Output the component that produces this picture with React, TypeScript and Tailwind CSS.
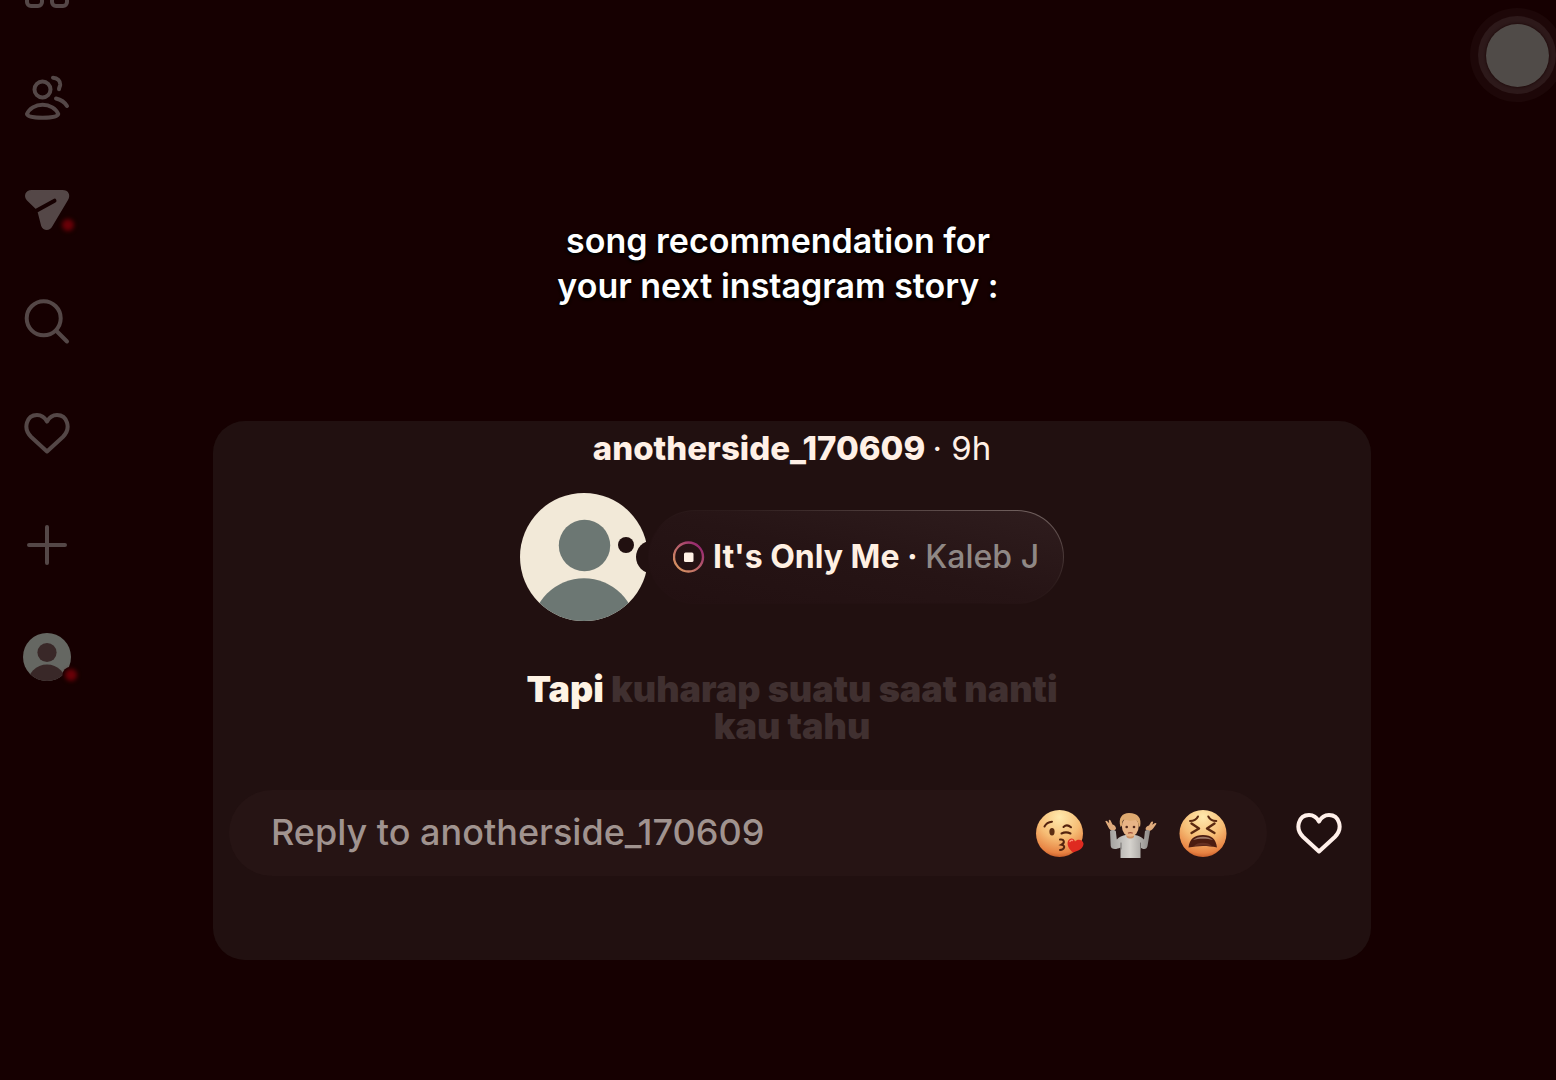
import type { ReactNode } from 'react'
import { clsx } from 'clsx'

const username = 'anotherside_170609'

function Icon({ children, className }: { children: ReactNode; className?: string }) {
  return (
    <svg
      className={clsx('h-12 w-12', className)}
      viewBox="0 0 48 48"
      fill="none"
      stroke="currentColor"
      strokeWidth={4}
      strokeLinecap="round"
      strokeLinejoin="round"
      aria-hidden="true"
    >
      {children}
    </svg>
  )
}

const heartPath =
  'M24 42.500 8.200 28C-.8 19 4 6 14 6c4.600 0 7.800 2.400 10 6.600C26.200 8.400 29.400 6 34 6c10 0 14.800 13 5.800 22z'

const navItems: { label: string; icon: ReactNode; dot?: string }[] = [
  {
    label: 'Home',
    icon: (
      <Icon>
        <rect x="4" y="4" width="15" height="15" rx="4" />
        <rect x="29" y="4" width="15" height="15" rx="4" />
        <rect x="4" y="30" width="15" height="15" rx="4" />
        <rect x="29" y="30" width="15" height="15" rx="4" />
      </Icon>
    ),
  },
  {
    label: 'Friends',
    icon: (
      <Icon>
        <circle cx="19.500" cy="16.500" r="8" />
        <path d="M4 41c2-5.300 8.500-9.300 15.600-9.300S33.200 35.700 35.200 41c-.6 2.700-6 3.700-15.600 3.700S4.600 43.700 4 41z" />
        <path d="M30 4.700c4.500.3 7.500 3.300 7.200 7-.2 1.800-1 2.500-1.200 4.500" />
        <path d="M33 25.500c5 1.200 8.700 3.700 11 7.500" />
      </Icon>
    ),
  },
  {
    label: 'Messages',
    dot: 'left-[39px] top-[34px]',
    icon: (
      <Icon>
        <path
          d="M8.500 5h31c6 0 8.500 5 5.500 10L29.500 41c-2.500 5.500-9.500 5-11.300 0L15 28.500c-.5-1.800-1.200-3.500-2.500-4.800L4 15.500C0 11 2.500 5 8.500 5z"
          fill="currentColor"
          stroke="none"
        />
        <path d="M11 27 31.500 15.700" className="text-[#160001]" />
      </Icon>
    ),
  },
  {
    label: 'Search',
    icon: (
      <Icon>
        <circle cx="20.700" cy="21.300" r="17" />
        <path d="M33.500 34 44 44.500" />
      </Icon>
    ),
  },
  {
    label: 'Activity',
    icon: (
      <Icon>
        <path d={heartPath} />
      </Icon>
    ),
  },
  {
    label: 'Create',
    icon: (
      <Icon>
        <path d="M24 6v36M6 24h36" />
      </Icon>
    ),
  },
  {
    label: 'Profile',
    dot: 'left-[42px] top-9',
    icon: (
      <svg className="h-12 w-12" viewBox="0 0 48 48" aria-hidden="true">
        <clipPath id="profile-clip">
          <circle cx="24" cy="24" r="24" />
        </clipPath>
        <g clipPath="url(#profile-clip)">
          <path d="M0 0h48v48H0z" fill="#656762" />
          <circle cx="24" cy="19.500" r="9.600" fill="#392828" />
          <circle cx="24" cy="51" r="19.500" fill="#392828" />
        </g>
        <circle cx="47.500" cy="42" r="8" fill="#160001" />
      </svg>
    ),
  },
]

function Sidebar() {
  return (
    <nav className="-mt-[39px] flex w-[94px] shrink-0 flex-col items-center gap-16 text-[#544747]">
      {navItems.map(({ label, icon, dot }) => (
        <button key={label} type="button" aria-label={label} className="relative h-12 w-12">
          {icon}
          {dot && <span className={clsx('absolute h-3 w-3 rounded-full bg-[#6a0007] blur-[2px]', dot)} />}
        </button>
      ))}
    </nav>
  )
}

function Avatar() {
  return (
    <svg className="h-32 w-32 shrink-0" viewBox="0 0 128 128" aria-hidden="true">
      <defs>
        <clipPath id="avatar-clip">
          <circle cx="64" cy="64" r="64" />
        </clipPath>
      </defs>
      <g clipPath="url(#avatar-clip)">
        <path d="M0 0h128v128H0z" fill="#f2e9d8" />
        <circle cx="64.500" cy="52.500" r="25.700" fill="#6c7773" />
        <circle cx="64" cy="137.500" r="52.300" fill="#6c7773" />
      </g>
      <circle cx="106" cy="52" r="8" fill="#211010" />
      <circle cx="132.500" cy="64" r="16.500" fill="#211010" />
      <path d="M126 0h2v128h-2z" fill="#211010" />
    </svg>
  )
}

function MusicPill() {
  return (
    <button
      type="button"
      className="rounded-full bg-linear-to-tr from-[#231112] from-40% via-[#2d1c1c] via-60% to-[#7a6a68] p-px"
    >
      <span className="flex h-[92px] items-center gap-2 rounded-full bg-linear-to-tr from-[#221011] via-[#261415] to-[#2f1d1e] px-6 text-[32px]">
        <svg className="h-8 w-8" viewBox="0 0 32 32" fill="none" aria-hidden="true">
          <defs>
            <linearGradient id="ring" x1="0" y1="1" x2="1" y2="0">
              <stop offset="0" stopColor="#dfa05f" />
              <stop offset=".5" stopColor="#b8616a" />
              <stop offset="1" stopColor="#8d1672" />
            </linearGradient>
          </defs>
          <circle cx="15.500" cy="16" r="14.500" stroke="url(#ring)" strokeWidth="2.400" />
          <rect x="11" y="11.500" width="9.500" height="9.500" rx="1.500" fill="#fff2e6" />
        </svg>
        <span className="whitespace-nowrap font-bold text-[#fff0e2]">
          It's Only Me · <span className="font-medium text-[#8f8885]">Kaleb J</span>
        </span>
      </span>
    </button>
  )
}

function FaceGradient({ id }: { id: string }) {
  return (
    <defs>
      <radialGradient id={id} cx=".5" cy=".15" r=".9">
        <stop offset="0" stopColor="#ffe9ad" />
        <stop offset=".5" stopColor="#f6bd75" />
        <stop offset=".85" stopColor="#e78242" />
        <stop offset="1" stopColor="#b84d20" />
      </radialGradient>
    </defs>
  )
}

function KissEmoji() {
  return (
    <svg className="h-12 w-12 overflow-visible" viewBox="0 0 48 48" fill="none" strokeLinecap="round" aria-hidden="true">
      <FaceGradient id="kiss-face" />
      <circle cx="24.500" cy="24.500" r="23.500" fill="url(#kiss-face)" />
      <g stroke="#54230f" strokeWidth="2">
        <path d="M9.500 17.500c1.500-3 4-4.500 7.500-4.800M28.500 18c2-2 5-2 7.500.3M26.500 24.500c3-1.500 6-1.500 9 0" />
        <path d="M25 30.500c4-.7 5.500 3 1.500 5.200 4.500.7 3 5-1.500 5.300" />
      </g>
      <ellipse cx="17" cy="22.800" rx="2.600" ry="3.700" fill="#5b2d12" />
      <path
        d="M38 43.500c-4-3.500-6.500-7.500-5-11.500 1.500-3.500 6-3.500 7 .5 2.500-3 8-2 8.500 2 .3 4.500-5 7.500-10.500 9z"
        fill="#df2a20"
      />
      <path d="M35 32.500c.5-1 1.500-1.500 2.500-1" stroke="#ff8a72" strokeWidth="1.500" />
    </svg>
  )
}

function ShrugEmoji() {
  return (
    <svg className="h-12 w-[52px] overflow-visible" viewBox="0 0 52 48" fill="none" strokeLinecap="round" aria-hidden="true">
      <defs>
        <linearGradient id="shirt" x1="0" y1="0" x2="1" y2="0">
          <stop offset="0" stopColor="#a3a19f" />
          <stop offset=".5" stopColor="#d6d3ce" />
          <stop offset="1" stopColor="#8d8a88" />
        </linearGradient>
      </defs>
      {/* hands */}
      <g fill="#dfab7c">
        <path d="M.3 12.300c.3-1 1.500-.8 2.200.1l1.700 1.800-.5-2.500c.2-1.200 1.500-1 2 0l1.800 3.800c2 .5 3.500 2 3.500 4.500L8.500 22c-2 0-4-1.500-5-3.500z" />
        <path d="M51.500 14.800c-.2-1-1.400-1-2.200-.4l-2 1.300.8-2.200c0-1.300-1.400-1.400-2-.4L44 16.500c-2 .5-3.200 1.700-3.500 3.700l2.300 2c2.500 0 4.500-1.200 5.700-3.200z" />
      </g>
      {/* sweater */}
      <path
        d="M5 22c1.500-1.300 4.200-1.300 5.800 0l1 8.500c2.200-2.500 5.700-4 9-4.500h9c3.500.5 6.700 2 9.200 4.500l1-8.500c1.500-1.300 3.700-1.300 5 0l-2.500 15c-.7 3.500-3.500 4-7 1.500V49H15.500V38.500c-5 2.500-9.500 1.700-9.800-1.500z"
        fill="url(#shirt)"
      />
      <path d="M16 34v6M35.500 34v6" stroke="#74706e" />
      <path d="M21.500 25h7.500v3c-2 2-5.500 2-7.500 0z" fill="#cc9063" />
      <ellipse cx="25.300" cy="17.500" rx="8.400" ry="10.300" fill="#e8b486" />
      <path
        d="M15.500 18C13 9 17 4 24 4c9 0 13 5 11 14l-1.500-1.500c0-3-1-4.500-3-5.500-4 1-8.500 1-11.500-.5-2 1.500-2 4-2 6z"
        fill="#deaa70"
      />
      <circle cx="21.700" cy="18" r="1.300" fill="#542b1d" />
      <circle cx="29" cy="18" r="1.300" fill="#542b1d" />
      <path d="M23.500 24c1-.5 2.700-.5 3.700 0" stroke="#9b4a36" strokeWidth="1.300" />
    </svg>
  )
}

function TiredEmoji() {
  return (
    <svg className="h-12 w-12" viewBox="0 0 48 48" fill="none" strokeLinecap="round" strokeLinejoin="round" aria-hidden="true">
      <FaceGradient id="tired-face" />
      <circle cx="24" cy="24.500" r="23.500" fill="url(#tired-face)" />
      <g stroke="#5a2910" strokeWidth="2">
        <path d="M11 12c3.500 0 6.500-1.500 8-4.500M37.300 12c-3.500 0-6.500-1.500-8-4.500" />
        <path d="m12.500 14.500 7.500 5-7.500 4.500M35.500 14.500l-7.500 5 7.500 4.500" strokeWidth="2.400" />
      </g>
      <path d="M9.500 38.500C10.500 30 15.500 26 24 26s13 4 14 12.500c-9-2-19-2-28.500 0z" fill="#4c1c10" />
      <path d="M14 31c4.500-4.500 15.500-4.500 20 0-6-1.800-14-1.800-20 0z" fill="#9c7767" />
      <path d="M15 37c3-4.500 14.500-4.500 18 0-6-.7-12-.7-18 0z" fill="#653022" />
    </svg>
  )
}

const reactions = [
  { label: 'Kiss', Emoji: KissEmoji },
  { label: 'Shrug', Emoji: ShrugEmoji },
  { label: 'Tired', Emoji: TiredEmoji },
]

function ReplyBar() {
  return (
    <form className="mt-[45px] flex items-center pl-4 pr-7">
      <div className="flex h-[86px] min-w-0 flex-1 items-center rounded-full bg-[#261414] pl-[42px] pr-[38px]">
        <input
          type="text"
          aria-label={`Reply to ${username}`}
          placeholder={`Reply to ${username}`}
          className="min-w-0 flex-1 bg-transparent pb-0.5 text-[36px] font-medium outline-none placeholder:text-[#a0938f]"
        />
        <div className="flex gap-5">
          {reactions.map(({ label, Emoji }) => (
            <button key={label} type="button" aria-label={label} className="flex h-12 w-[52px] items-center justify-center">
              <Emoji />
            </button>
          ))}
        </div>
      </div>
      <button type="button" aria-label="Like" className="ml-7 text-[#fff0ea]">
        <Icon>
          <path d={heartPath} />
        </Icon>
      </button>
    </form>
  )
}

function NoteCard() {
  return (
    <section className="ml-[119px] mr-[185px] mt-[113px] rounded-[32px] bg-[#211010] pb-[84px]">
      <h2 className="text-center text-[33px] leading-[54px] font-extrabold text-[#fff0e6]">
        {username} <span className="font-normal">· 9h</span>
      </h2>

      <div className="mt-[18px] flex items-center justify-center">
        <Avatar />
        <MusicPill />
      </div>

      <p className="mx-auto mt-[50px] max-w-[560px] text-center text-[36px] leading-[37px] font-black text-[#403030]">
        <span className="text-[#fff3e4]">Tapi</span> kuharap suatu saat nanti kau tahu
      </p>

      <ReplyBar />
    </section>
  )
}

export default function App() {
  return (
    <div className="relative flex min-h-screen overflow-hidden bg-[#160001] font-['Inter',sans-serif]">
      <Sidebar />

      <main className="min-w-0 flex-1 pt-[218px]">
        <h1 className="pr-[94px] text-center text-[34px] leading-[45px] font-semibold text-white [text-shadow:0_0_3px_#000,0_2px_3px_#000]">
          song recommendation for
          <br />
          your next instagram story :
        </h1>
        <NoteCard />
      </main>

      {/* Floating touch button */}
      <button
        type="button"
        aria-label="Assistive touch"
        className="absolute -right-2 top-2 flex h-[94px] w-[94px] items-center justify-center rounded-full bg-[#1d0708]"
      >
        <span className="flex h-[78px] w-[78px] items-center justify-center rounded-full bg-[#2d191a]">
          <span className="h-[63px] w-[63px] rounded-full bg-[#504b48] shadow-[0_0_3px_#160001]" />
        </span>
      </button>
    </div>
  )
}
